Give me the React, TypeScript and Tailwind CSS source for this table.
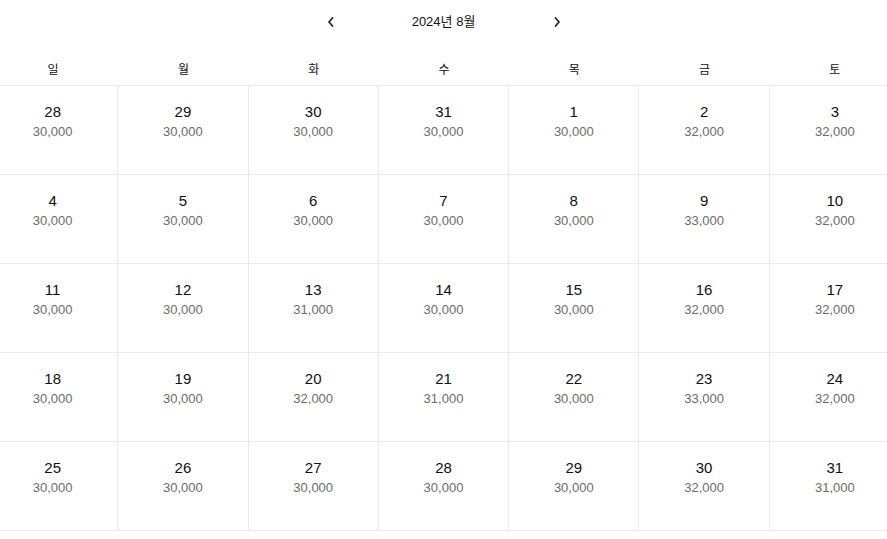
import React from "react";

const weekdays = ["일", "월", "화", "수", "목", "금", "토"];

const days: [string, string][] = [
  ["28", "30,000"], ["29", "30,000"], ["30", "30,000"], ["31", "30,000"], ["1", "30,000"], ["2", "32,000"], ["3", "32,000"],
  ["4", "30,000"], ["5", "30,000"], ["6", "30,000"], ["7", "30,000"], ["8", "30,000"], ["9", "33,000"], ["10", "32,000"],
  ["11", "30,000"], ["12", "30,000"], ["13", "31,000"], ["14", "30,000"], ["15", "30,000"], ["16", "32,000"], ["17", "32,000"],
  ["18", "30,000"], ["19", "30,000"], ["20", "32,000"], ["21", "31,000"], ["22", "30,000"], ["23", "33,000"], ["24", "32,000"],
  ["25", "30,000"], ["26", "30,000"], ["27", "30,000"], ["28", "30,000"], ["29", "30,000"], ["30", "32,000"], ["31", "31,000"],
];

function Chevron({ dir }: { dir: "left" | "right" }) {
  return (
    <svg width="12" height="12" viewBox="0 0 12 12" fill="none">
      {dir === "left" ? (
        <path d="M7.5 2 L4 6 L7.5 10" stroke="#222" strokeWidth="1.8" strokeLinecap="round" strokeLinejoin="round" />
      ) : (
        <path d="M4.5 2 L8 6 L4.5 10" stroke="#222" strokeWidth="1.8" strokeLinecap="round" strokeLinejoin="round" />
      )}
    </svg>
  );
}

export default function App() {
  return (
    <div
      className="w-[887px] h-[539px] overflow-hidden bg-white text-[#111]"
      style={{ fontFamily: '"Liberation Sans", Arial, "Noto Sans CJK KR", sans-serif' }}
    >
      <div className="h-[44px] flex items-center justify-center">
        <button className="w-[12px] h-[12px] flex items-center justify-center">
          <Chevron dir="left" />
        </button>
        <div className="w-[214px] text-center text-[13px] leading-[18px]">2024년 8월</div>
        <button className="w-[12px] h-[12px] flex items-center justify-center">
          <Chevron dir="right" />
        </button>
      </div>
      <div className="w-[912px] -ml-[12px]">
        <div className="grid grid-cols-7 h-[42px] border-b border-[#ebebeb] items-end pb-[6px]">
          {weekdays.map((w) => (
            <div key={w} className="text-center text-[12px] leading-[18px]">
              {w}
            </div>
          ))}
        </div>
        <div className="grid grid-cols-7">
          {days.map(([d, p], i) => (
            <div
              key={i}
              className={`h-[89px] border-b border-[#ebebeb] flex flex-col items-center pt-[16px] ${
                i % 7 === 6 ? "" : "border-r"
              }`}
            >
              <div className="text-[15px] leading-[20px] text-[#111]">{d}</div>
              <div className="text-[13px] leading-[18px] text-[#6b6b6b] mt-[1px]">{p}</div>
            </div>
          ))}
        </div>
      </div>
    </div>
  );
}
